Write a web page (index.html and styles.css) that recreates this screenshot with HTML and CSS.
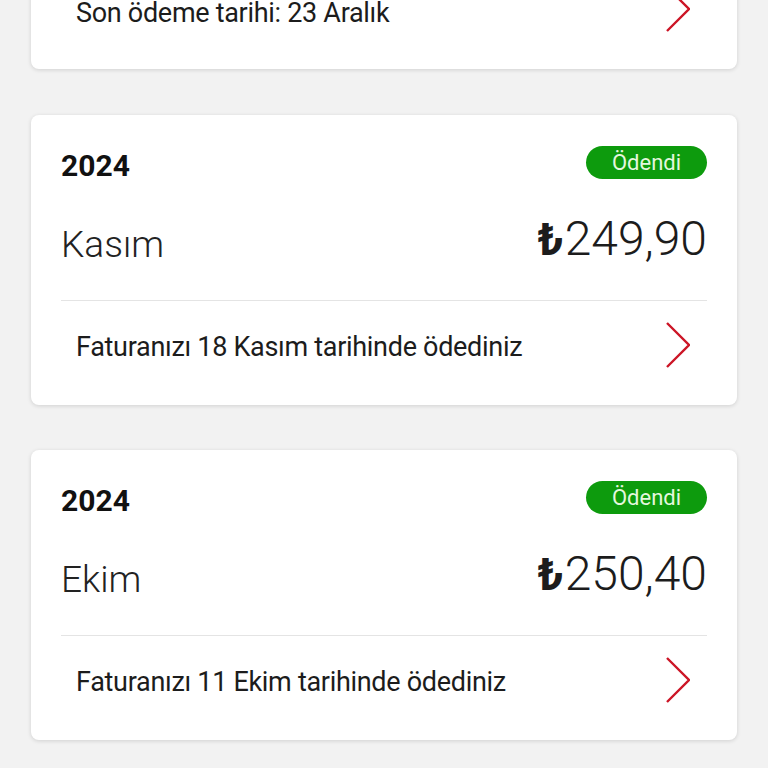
FILE: index.html
```html
<!DOCTYPE html>
<html lang="tr">
<head>
<meta charset="utf-8">
<title>Faturalar</title>
<link rel="stylesheet" href="styles.css">
</head>
<body>
<main class="list">
  <section class="card card-first">
    <div class="foot">
      <span class="foot-text">Son ödeme tarihi: 23 Aralık</span>
      <svg class="chev" viewBox="0 0 24 46" width="24" height="46"><path d="M1 1 L23 23 L1 45" fill="none" stroke="#cc1526" stroke-width="2.4"/></svg>
    </div>
  </section>

  <section class="card">
    <div class="head">
      <span class="year">2024</span>
      <span class="badge">Ödendi</span>
    </div>
    <div class="main-row">
      <span class="month">Kasım</span>
      <span class="amount"><span class="cur">₺</span>249,90</span>
    </div>
    <div class="divider"></div>
    <div class="foot">
      <span class="foot-text">Faturanızı 18 Kasım tarihinde ödediniz</span>
      <svg class="chev" viewBox="0 0 24 46" width="24" height="46"><path d="M1 1 L23 23 L1 45" fill="none" stroke="#cc1526" stroke-width="2.4"/></svg>
    </div>
  </section>

  <section class="card">
    <div class="head">
      <span class="year">2024</span>
      <span class="badge">Ödendi</span>
    </div>
    <div class="main-row">
      <span class="month">Ekim</span>
      <span class="amount"><span class="cur">₺</span>250,40</span>
    </div>
    <div class="divider"></div>
    <div class="foot">
      <span class="foot-text">Faturanızı 11 Ekim tarihinde ödediniz</span>
      <svg class="chev" viewBox="0 0 24 46" width="24" height="46"><path d="M1 1 L23 23 L1 45" fill="none" stroke="#cc1526" stroke-width="2.4"/></svg>
    </div>
  </section>
</main>
</body>
</html>
```

FILE: styles.css
```css
html, body {
  margin: 0;
  padding: 0;
  background: #f2f2f2;
  font-family: Roboto, "Noto Sans", sans-serif;
  color: #1c1c1c;
  overflow: hidden;
  height: 768px;
}

.list {
  padding: 0 31px;
}

.card {
  background: #ffffff;
  border-radius: 8px;
  box-shadow: 0 1px 4px rgba(0, 0, 0, 0.14);
  padding: 31px 30px 38px;
  margin-bottom: 45px;
}

.card-first {
  margin-top: -13px;
  margin-bottom: 46px;
  padding-top: 0;
  border-radius: 0 0 8px 8px;
}

.card-first .foot {
  margin-top: 0;
}

.card-first .foot-text {
  line-height: 24px;
  padding-top: 7px;
}

.head {
  display: flex;
  justify-content: space-between;
  align-items: center;
  height: 33px;
}

.year {
  font-size: 30px;
  font-weight: 700;
  line-height: 33px;
  padding-top: 5px;
  color: #111;
}

.badge {
  display: flex;
  align-items: center;
  justify-content: center;
  width: 121px;
  height: 33px;
  border-radius: 17px;
  background: #0d9b0d;
  color: #e4f7de;
  font-size: 22px;
  line-height: 33px;
}

.main-row {
  display: flex;
  justify-content: space-between;
  align-items: flex-start;
  margin-top: 32px;
  height: 56px;
}

.month {
  font-size: 37px;
  font-weight: 300;
  line-height: 44px;
  margin-top: 12px;
  color: #222;
}

.amount {
  font-size: 48px;
  font-weight: 300;
  line-height: 56px;
  color: #1c1c1c;
}

.cur {
  font-weight: 700;
  font-size: 44px;
  margin-right: 1px;
}

.divider {
  height: 1px;
  background: #e4e4e4;
  margin-top: 33px;
}

.foot {
  display: flex;
  justify-content: space-between;
  align-items: center;
  height: 44px;
  margin-top: 22px;
  padding: 0 17px 0 15px;
}

.foot-text {
  font-size: 27px;
  letter-spacing: -0.3px;
  line-height: 32px;
  padding-top: 3px;
  color: #1c1c1c;
}

.chev {
  display: block;
}
```
